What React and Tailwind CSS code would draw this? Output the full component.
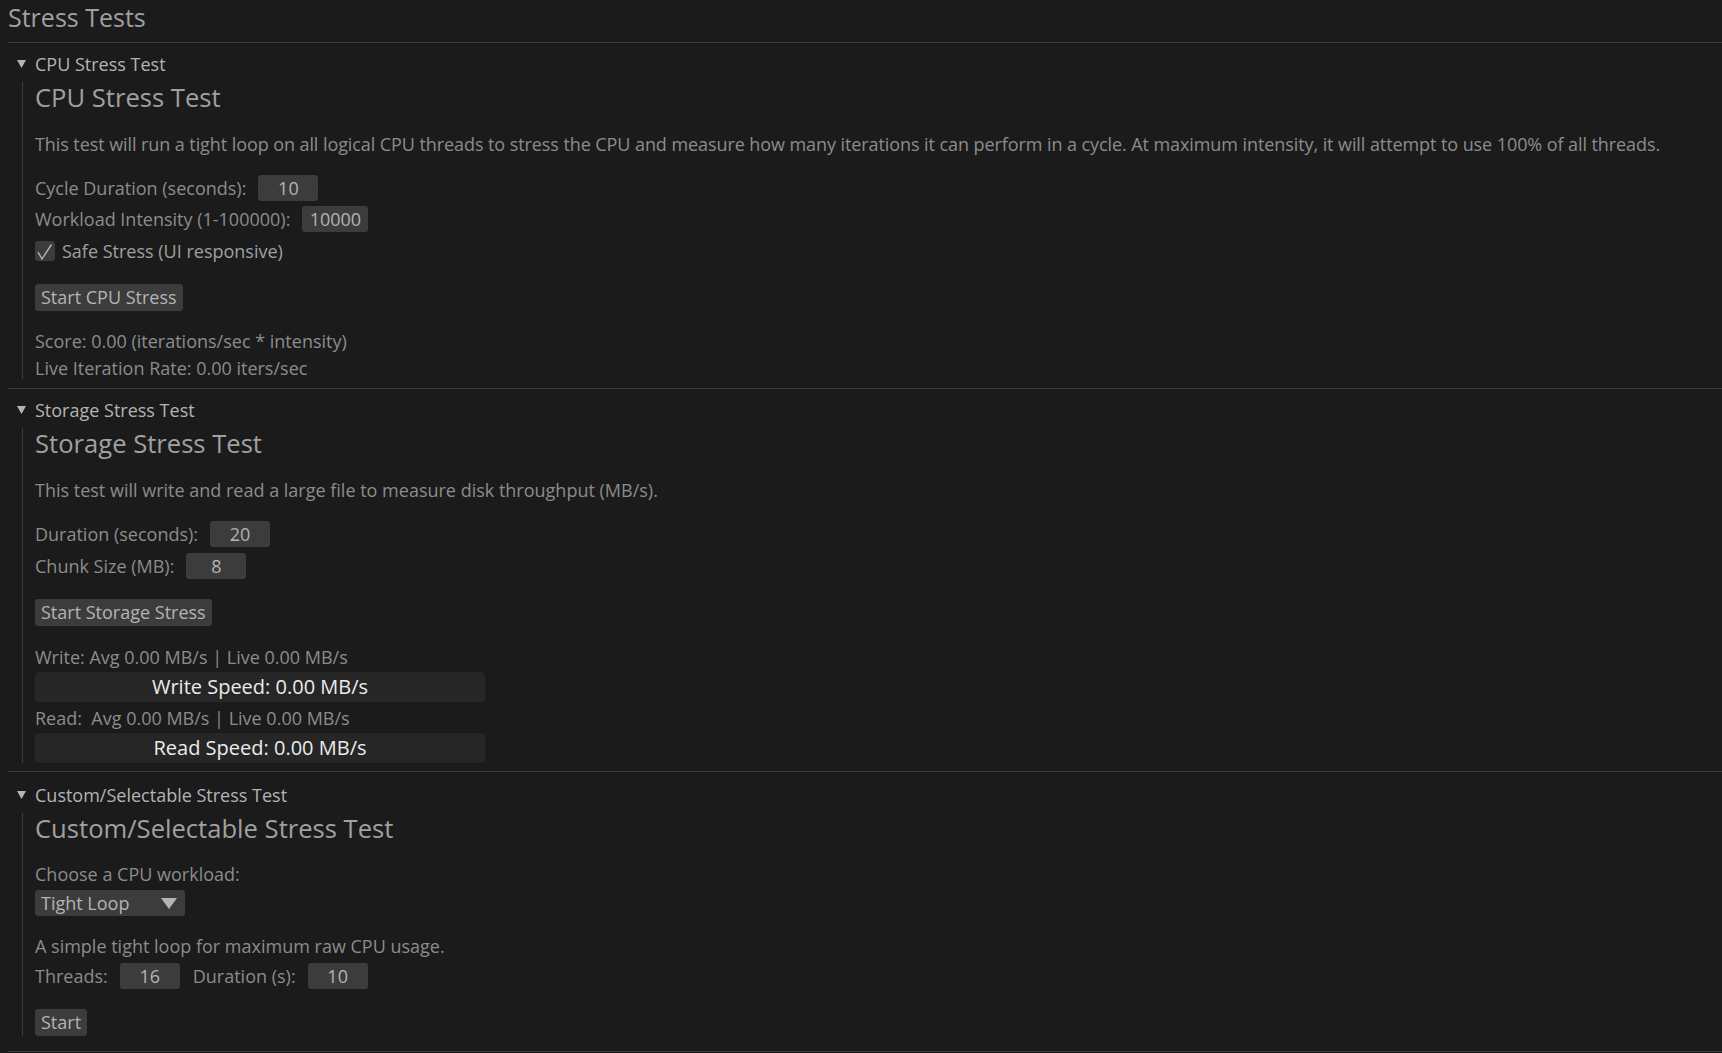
import React from 'react';

const BOX = 'h-[26px] rounded-[3px] bg-[#3c3c3c] text-[#b4b4b4] flex items-center';

function DragValue({ value, w = 'w-[60px]' }) {
  return <div className={`${BOX} ${w} justify-center`}>{value}</div>;
}

function Btn({ children, className = '' }) {
  return (
    <div className={`h-[27px] rounded-[3px] bg-[#3c3c3c] text-[#b4b4b4] px-[6px] flex items-center w-fit ${className}`}>
      {children}
    </div>
  );
}

function Line({ children, className = '' }) {
  return <div className={`h-[24px] leading-[24px] whitespace-nowrap ${className}`}>{children}</div>;
}

function Separator({ className = '' }) {
  return <div className={`h-px bg-[#3d3d3d] ${className}`} />;
}

function Section({ title, headerTop, bodyTop, children }) {
  return (
    <div>
      <div className={`flex items-center h-[24px] text-[#b4b4b4] ${headerTop}`}>
        <svg width="9" height="8" viewBox="0 0 9 8" className="ml-[9px] mr-[9px]">
          <polygon points="0,0 9,0 4.5,8" fill="#b4b4b4" />
        </svg>
        <span className="whitespace-nowrap">{title}</span>
      </div>
      <div className={`ml-[14px] border-l border-[#3d3d3d] pl-[12px] ${bodyTop}`}>
        <div className="h-[31px] leading-[31px] text-[25.6px] text-[#a0a0a0] whitespace-nowrap">{title}</div>
        {children}
      </div>
    </div>
  );
}

function Progress({ label, className = '' }) {
  return (
    <div className={`w-[450px] h-[30px] rounded-[4px] bg-[#262626] flex items-center justify-center text-[20px] text-[#ebebeb] ${className}`}>
      {label}
    </div>
  );
}

export default function App() {
  return (
    <div className="h-[1053px] overflow-hidden bg-[#1b1b1b] pl-[8px] text-[18px] text-[#8c8c8c] font-['Open_Sans',sans-serif]">
      <div className="h-[34px] leading-[34px] text-[25px] text-[#a0a0a0]">Stress Tests</div>
      <Separator className="mt-[8px]" />

      <Section title="CPU Stress Test" headerTop="mt-[9px]" bodyTop="mt-[6px]">
        <Line className="mt-[19px] tracking-[-0.08px]">
          This test will run a tight loop on all logical CPU threads to stress the CPU and measure how many iterations it can perform in a cycle. At maximum intensity, it will attempt to use 100% of all threads.
        </Line>
        <div className="mt-[19px] flex items-center gap-[12px] h-[26px]">
          <span>Cycle Duration (seconds):</span>
          <DragValue value="10" />
        </div>
        <div className="mt-[5px] flex items-center gap-[12px] h-[26px]">
          <span>Workload Intensity (1-100000):</span>
          <DragValue value="10000" w="w-[66px]" />
        </div>
        <div className="mt-[7px] flex items-center gap-[7px] h-[24px]">
          <div className="w-[20px] h-[20px] rounded-[3px] bg-[#3c3c3c]">
            <svg width="20" height="20" viewBox="0 0 20 20">
              <polyline points="3,11 7,18 16.5,3.5" fill="none" stroke="#b4b4b4" strokeWidth="1.4" />
            </svg>
          </div>
          <span className="text-[#a0a0a0]">Safe Stress (UI responsive)</span>
        </div>
        <Btn className="mt-[21px]">Start CPU Stress</Btn>
        <Line className="mt-[18px]">Score: 0.00 (iterations/sec * intensity)</Line>
        <div className="mt-[4px] h-[22px] leading-[22px] whitespace-nowrap">Live Iteration Rate: 0.00 iters/sec</div>
      </Section>

      <Separator className="mt-[9px]" />

      <Section title="Storage Stress Test" headerTop="mt-[9px]" bodyTop="mt-[6px]">
        <Line className="mt-[19px]">This test will write and read a large file to measure disk throughput (MB/s).</Line>
        <div className="mt-[19px] flex items-center gap-[12px] h-[26px]">
          <span>Duration (seconds):</span>
          <DragValue value="20" />
        </div>
        <div className="mt-[6px] flex items-center gap-[12px] h-[26px]">
          <span>Chunk Size (MB):</span>
          <DragValue value="8" />
        </div>
        <Btn className="mt-[20px]">Start Storage Stress</Btn>
        <Line className="mt-[19px]">Write: Avg 0.00 MB/s | Live 0.00 MB/s</Line>
        <Progress className="mt-[3px]" label="Write Speed: 0.00 MB/s" />
        <Line className="mt-[4px]">Read:&nbsp; Avg 0.00 MB/s | Live 0.00 MB/s</Line>
        <Progress className="mt-[3px]" label="Read Speed: 0.00 MB/s" />
      </Section>

      <Separator className="mt-[8px]" />

      <Section title="Custom/Selectable Stress Test" headerTop="mt-[11px]" bodyTop="mt-[6px]">
        <Line className="mt-[18px]">Choose a CPU workload:</Line>
        <div className={`${BOX} w-[150px] mt-[4px] pl-[6px] justify-between pr-[8px]`}>
          <span>Tight Loop</span>
          <svg width="16" height="11" viewBox="0 0 16 11">
            <polygon points="0,0 16,0 8,11" fill="#b4b4b4" />
          </svg>
        </div>
        <Line className="mt-[18px]">A simple tight loop for maximum raw CPU usage.</Line>
        <div className="mt-[5px] flex items-center h-[26px]">
          <span>Threads:</span>
          <div className="ml-[12px]"><DragValue value="16" /></div>
          <span className="ml-[13px]">Duration (s):</span>
          <div className="ml-[12px]"><DragValue value="10" /></div>
        </div>
        <Btn className="mt-[20px]">Start</Btn>
      </Section>

      <Separator className="mt-[15px]" />
    </div>
  );
}
